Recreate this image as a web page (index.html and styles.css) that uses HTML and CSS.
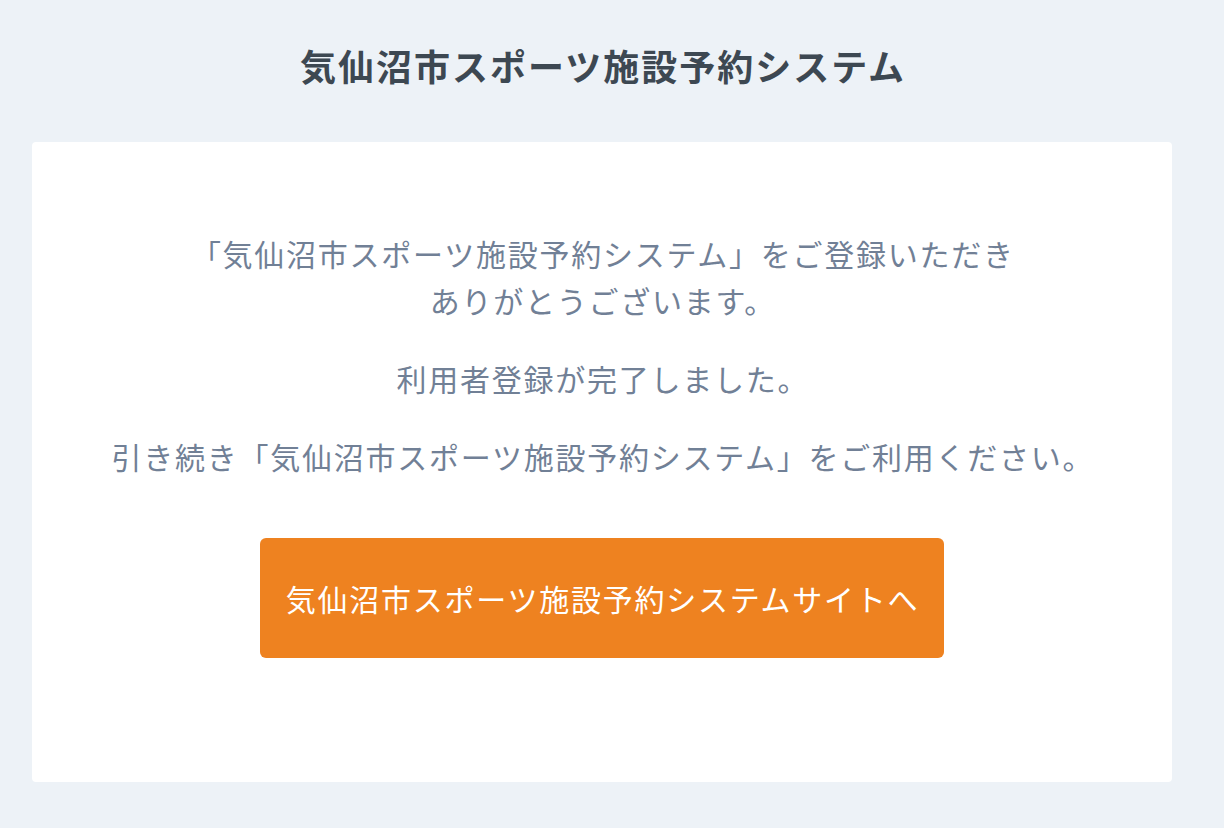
FILE: index.html
```html
<!DOCTYPE html>
<html lang="ja">
<head>
<meta charset="utf-8">
<title>気仙沼市スポーツ施設予約システム</title>
<link rel="stylesheet" href="styles.css">
</head>
<body>
<div class="page">
  <header class="site-header">
    <h1 class="site-title">気仙沼市スポーツ施設予約システム</h1>
  </header>
  <main class="card">
    <p class="message">「気仙沼市スポーツ施設予約システム」をご登録いただき<br>ありがとうございます。</p>
    <p class="message">利用者登録が完了しました。</p>
    <p class="message">引き続き「気仙沼市スポーツ施設予約システム」をご利用ください。</p>
    <div class="actions">
      <a class="btn-primary" href="#">気仙沼市スポーツ施設予約システムサイトへ</a>
    </div>
  </main>
</div>
</body>
</html>
```

FILE: styles.css
```css
* {
  box-sizing: border-box;
}

html, body {
  margin: 0;
  padding: 0;
}

body {
  background: #edf2f7;
  font-family: "Noto Sans CJK JP", "Noto Sans", sans-serif;
  color: #718096;
}

.page {
  padding: 0 52px 46px 32px;
}

.site-header {
  padding-top: 40px;
  padding-bottom: 52px;
  text-align: center;
}

.site-title {
  margin: 0;
  font-size: 36px;
  line-height: 50px;
  font-weight: 700;
  letter-spacing: 2px;
  padding-left: 2px;
  color: #3d4852;
}

.card {
  background: #ffffff;
  border-radius: 4px;
  height: 640px;
  padding-top: 88px;
  text-align: center;
}

.message {
  margin: 0 0 31px;
  font-size: 30px;
  line-height: 47px;
  letter-spacing: 1.75px;
  padding-left: 1.75px;
  color: #718096;
}

.actions {
  padding-top: 27px;
  display: flex;
  justify-content: center;
}

.btn-primary {
  display: inline-flex;
  align-items: center;
  justify-content: center;
  height: 120px;
  padding: 0 25px 0 26px;
  background: #ee8220;
  border-radius: 6px;
  color: #ffffff;
  font-size: 30px;
  letter-spacing: 1.75px;
  text-decoration: none;
}
```
